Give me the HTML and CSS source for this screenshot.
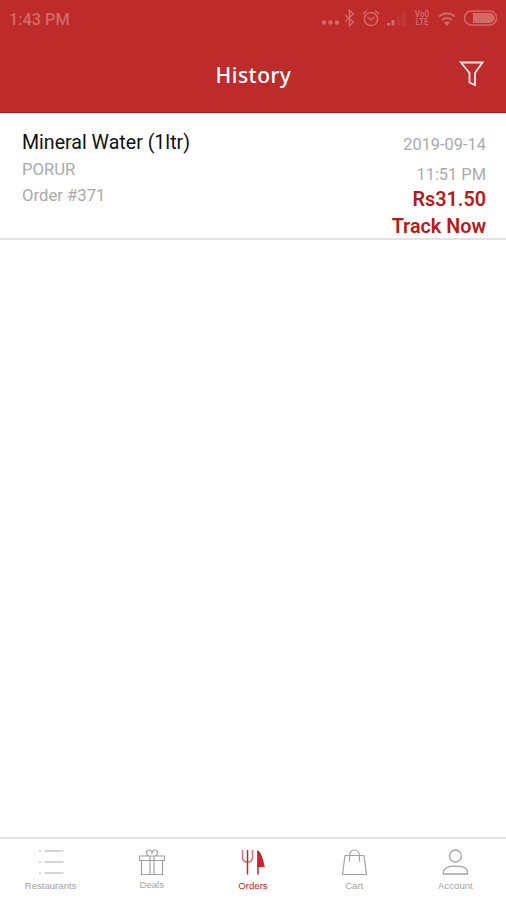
FILE: index.html
```html
<!DOCTYPE html>
<html lang="en">
<head>
  <meta charset="UTF-8" />
  <meta name="viewport" content="width=device-width, initial-scale=1.0"/>
  <title>History</title>
  <link rel="stylesheet" href="styles.css">
</head>
<body>

  <header>
    <div class="status-bar">
      <span class="clock">1:43 PM</span>
      <div class="status-icons">
        <svg width="90" height="20" viewBox="0 0 90 20" fill="none" stroke="currentColor" stroke-width="1.5">
          <!-- more -->
          <g fill="currentColor" stroke="none">
            <circle cx="4" cy="14.5" r="2.2"/>
            <circle cx="10.5" cy="14.5" r="2.2"/>
            <circle cx="17" cy="14.5" r="2.2"/>
          </g>
          <!-- bluetooth -->
          <path d="M25 7l8.500 7-4 3.500v-15l4 3.500-8.500 7.500"/>
          <!-- alarm -->
          <circle cx="51" cy="11" r="6.6"/>
          <path d="M47.5 9l3.500 3 3.500-3M43 6l4-3.500M59 6l-4-3.500"/>
          <!-- signal -->
          <g fill="currentColor" stroke="none">
            <rect x="67" y="15" width="3" height="2.5"/>
            <rect x="71.5" y="12" width="3" height="5.5"/>
            <rect x="77" y="8" width="3.5" height="9.5" opacity=".2"/>
            <rect x="82" y="4" width="4" height="13.5" opacity=".2"/>
          </g>
        </svg>
        <div class="volte">
          <span>Vo0</span>
          <span>LTE</span>
        </div>
        <svg width="64" height="20" viewBox="0 0 64 20" fill="none" stroke="currentColor" stroke-width="1.5">
          <!-- wifi -->
          <path d="M5 8.5q8-6.500 16 0M8 12q5-4 10 0" stroke-width="1.8"/>
          <path d="M10 14.500q3-2 6 0l-3 3.500z" fill="currentColor" stroke="none"/>
          <!-- battery -->
          <rect x="30.5" y="3" width="32" height="14" rx="7"/>
          <path d="M39 5h16.500a5 5 0 0 1 0 10H39z" fill="currentColor" stroke="none"/>
        </svg>
      </div>
    </div>
    <div class="title-bar">
      <h1>History</h1>
      <button class="filter" aria-label="Filter">
        <svg width="26" height="28" viewBox="0 0 26 28" fill="none" stroke="currentColor" stroke-width="1.9">
          <path d="M2 2.500h21.500L16 13v12L10.500 22.500V13z"/>
        </svg>
      </button>
    </div>
  </header>

  <main>
    <div class="order">
      <div class="order-info">
        <div class="item-name">Mineral Water (1ltr)</div>
        <div class="place">PORUR</div>
        <div class="order-number">Order #371</div>
      </div>
      <div class="order-status">
        <div class="date">2019-09-14</div>
        <div class="time">11:51 PM</div>
        <div class="price">Rs31.50</div>
        <a class="track" href="#">Track Now</a>
      </div>
    </div>
  </main>

  <nav>
    <a class="tab" href="#">
      <svg width="28" height="28" viewBox="0 0 28 28" fill="none" stroke="#c9c9c9" stroke-width="1.6">
        <path d="M2 2h2M7.5 2h19M2 13h2M7.5 13h19M2 24h2M7.5 24h19"/>
      </svg>
      <span>Restaurants</span>
    </a>
    <a class="tab deals" href="#">
      <svg width="28" height="28" viewBox="0 0 28 28" fill="none" stroke="currentColor" stroke-width="1.2">
        <path d="M1.500 7h25v4.500h-25zM3.500 11.500h21V25.500h-21zM12 7v18.500M16 7v18.500"/>
        <path d="M10.500 7C7.500 5 8 1 11 1c2 0 3 2 3 4 0-2 1-4 3-4 3 0 3.500 4 .5 6"/>
      </svg>
      <span>Deals</span>
    </a>
    <a class="tab active" href="#">
      <svg width="28" height="28" viewBox="0 0 28 28" fill="none" stroke="currentColor" stroke-width="1.5">
        <path d="M3.500 1v7.500q0 4.500 5 4.500t5-4.500V1" opacity=".65"/>
        <path d="M8.500 1v24.500M19 2v23.500"/>
        <path d="M18.300 1c4 2 5.500 8 7.500 17h-7.500z" fill="currentColor" stroke="none"/>
      </svg>
      <span>Orders</span>
    </a>
    <a class="tab" href="#">
      <svg width="28" height="28" viewBox="0 0 28 28" fill="none" stroke="currentColor" stroke-width="1.2">
        <path d="M5 6.500h19l2.500 19h-24z"/>
        <path d="M9.500 12.500V7c0-3.500 2-6 5-6s5 2.500 5 6v5.500"/>
      </svg>
      <span>Cart</span>
    </a>
    <a class="tab" href="#">
      <svg width="28" height="28" viewBox="0 0 28 28" fill="none" stroke="currentColor" stroke-width="1.3">
        <circle cx="14.5" cy="7" r="6"/>
        <path d="M2.500 25v-3c2-6.500 22-6.500 24 0v3z"/>
      </svg>
      <span>Account</span>
    </a>
  </nav>

</body>
</html>
```
FILE: styles.css
```css
* {
  box-sizing: border-box;
}

body {
  font-family: Roboto, "Liberation Sans", sans-serif;
  margin: 0;
  height: 100vh;
  display: flex;
  flex-direction: column;
  background-color: #fff;
}

header {
  height: 113px;
  background-color: #bd2b2b;
  border-bottom: 1px solid #b41318;
  color: #fff;
}

/* Status bar */
.status-bar {
  height: 38px;
  padding: 0 8px 0 9px;
  display: flex;
  justify-content: space-between;
  align-items: center;
  color: #d26a66;
}

.clock {
  font-size: 16.3px;
  font-weight: 500;
}

.status-icons {
  display: flex;
  align-items: center;
  margin-bottom: 2px;
}

.volte {
  width: 24px;
  display: flex;
  flex-direction: column;
  align-items: center;
  font-size: 8.2px;
  font-weight: 600;
  line-height: 8.5px;
}

/* Title */
.title-bar {
  height: 74px;
  padding: 0 21px 2px 22px;
  display: grid;
  grid-template-columns: 26px 1fr 26px;
  align-items: center;
}

h1 {
  grid-column: 2;
  margin: 2px 0 0;
  text-align: center;
  font-family: "Noto Sans", "Open Sans", sans-serif;
  font-size: 21px;
  font-weight: 500;
  letter-spacing: 0.5px;
}

.filter {
  padding: 0;
  border: none;
  background: none;
  color: #ffe5e3;
  display: flex;
}

/* Order list */
main {
  flex: 1;
}

.order {
  height: 127px;
  padding: 16px 20px 0 22px;
  display: flex;
  justify-content: space-between;
  border-bottom: 2px solid #e2e2e2;
  font-size: 16.7px;
  color: #aaa;
}

.item-name {
  font-size: 19.6px;
  line-height: 27px;
  margin-bottom: 1px;
  color: #111;
}

.place,
.order-number {
  line-height: 26px;
}

.order-status {
  display: flex;
  flex-direction: column;
  align-items: flex-end;
}

.date,
.time {
  line-height: 30px;
  font-size: 16.4px;
}

.date {
  margin-top: 1px;
}

.price,
.track {
  font-size: 19.8px;
  font-weight: 600;
  line-height: 27px;
  color: #b51a1c;
  text-decoration: none;
}

.price {
  margin-top: -4px;
}

/* Bottom tabs */
nav {
  height: 63px;
  display: grid;
  grid-template-columns: repeat(5, 1fr);
  border-top: 2px solid #e2e2e2;
}

.tab {
  padding-top: 10px;
  display: flex;
  flex-direction: column;
  align-items: center;
  font-family: "Liberation Sans", Arial, sans-serif;
  font-size: 9.6px;
  line-height: 17px;
  color: #a3a3a3;
  text-decoration: none;
}

.tab.active {
  color: #c2282c;
}

.tab.deals span {
  margin-top: -1px;
}
```
